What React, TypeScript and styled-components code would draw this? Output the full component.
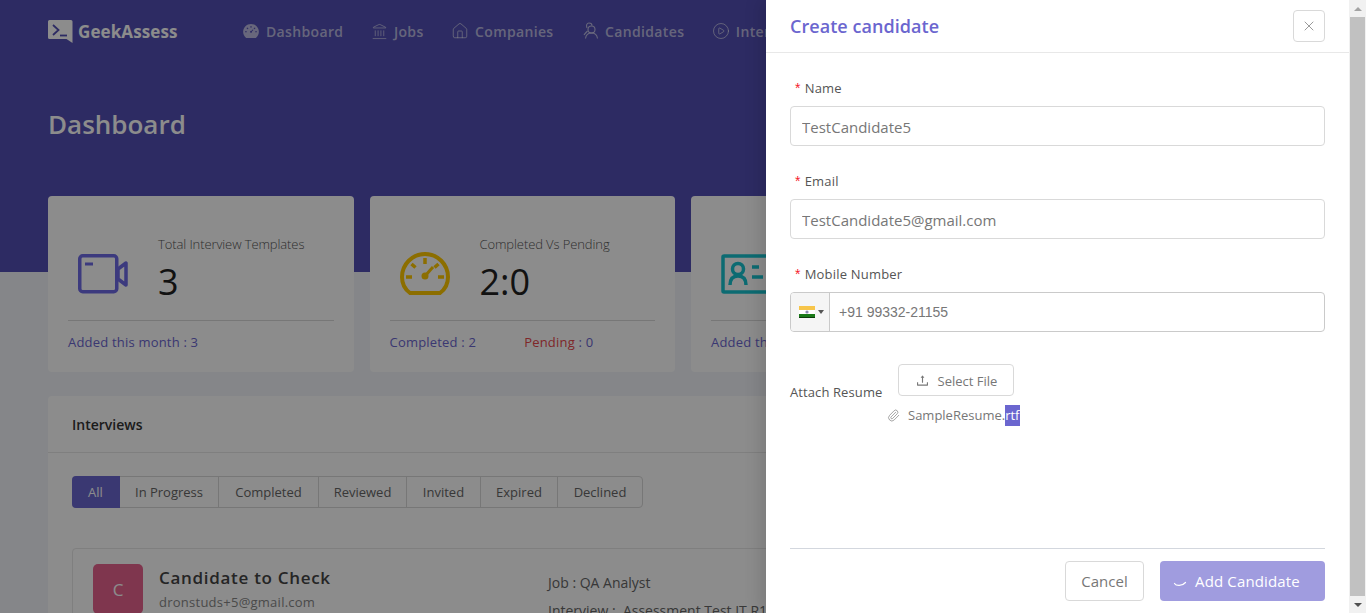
import React from 'react';
import styled, { createGlobalStyle } from 'styled-components';
import { AiFillDashboard, AiOutlineUpload } from 'react-icons/ai';
import { CirclePlay, House, Landmark, Paperclip, X } from 'lucide-react';

const primary = '#6b66cf';

const GlobalStyle = createGlobalStyle`
  html, body {
    margin: 0;
    height: 100%;
    overflow: hidden;
    background: #f2f4fa;
    font-family: "Open Sans", "Noto Sans", sans-serif;
  }
  * { box-sizing: border-box; }
`;

const Shell = styled.div`
  display: flex;
  width: 1366px;
  height: 613px;
  overflow: hidden;
`;

const Viewport = styled.div`
  position: relative;
  flex: 1;
  overflow: hidden;
`;

const Hero = styled.div`
  height: 272px;
  padding: 0 48px;
  background: #524fb4;
  color: #fff;
`;

const TopBar = styled.div`
  display: flex;
  align-items: center;
  height: 62px;
`;

const Logo = styled.div`
  display: flex;
  align-items: center;
  gap: 5px;
  width: 194px;
  font-size: 17px;
  font-weight: 700;
  letter-spacing: 0.1px;
`;

const NavItem = styled.div`
  display: flex;
  align-items: center;
  gap: 6px;
  margin-right: 27.5px;
  color: rgba(255, 255, 255, 0.62);
  font-size: 14px;
  font-weight: 600;
  letter-spacing: 0.35px;
  white-space: nowrap;
`;

const PageTitle = styled.h1`
  margin: 43px 0 0;
  font-size: 26px;
  line-height: 38px;
  font-weight: 600;
`;

const Content = styled.div`
  margin-top: -76px;
  padding: 0 48px;
`;

const Stats = styled.div`
  display: grid;
  grid-template-columns: repeat(4, 305.5px);
  gap: 16px;
`;

const StatCard = styled.div`
  height: 176px;
  padding: 0 20px;
  background: #fff;
  border-radius: 4px;
`;

const StatTop = styled.div`
  display: flex;
  align-items: center;
  height: 125px;
  padding: 32px 0 0 10px;
  border-bottom: 1px solid #d9d9d9;
`;

const StatIcon = styled.div`
  width: 80px;
  display: flex;
`;

const StatText = styled.div`
  padding-bottom: 6px;
`;

const StatLabel = styled.div`
  font-size: 13px;
  font-weight: 300;
  letter-spacing: -0.1px;
  color: #555;
  line-height: 18px;
  margin-bottom: 4px;
  white-space: nowrap;
`;

const StatValue = styled.div`
  font-size: 36px;
  line-height: 50px;
  color: #222;
`;

const StatFoot = styled.div`
  display: flex;
  gap: 48px;
  padding-top: 11px;
  font-size: 13px;
  letter-spacing: 0.2px;
  line-height: 20px;
  color: ${primary};
`;

const Danger = styled.span`
  color: #e8474c;
`;

const Panel = styled.div`
  margin-top: 24px;
  width: 1272px;
  background: #fff;
  border-radius: 4px;
`;

const PanelHead = styled.div`
  height: 57px;
  padding: 18px 24px 0;
  border-bottom: 1px solid #e8e8e8;
  font-size: 14px;
  line-height: 22px;
  font-weight: 600;
  color: #333;
`;

const PanelBody = styled.div`
  padding: 23px 24px;
`;

const Tabs = styled.div`
  display: flex;
  width: max-content;
  height: 32px;
  border: 1px solid #d9d9d9;
  border-radius: 4px;
`;

const Tab = styled.div<{ $active?: boolean; $width: number }>`
  width: ${p => p.$width}px;
  text-align: center;
  font-size: 13px;
  color: ${p => (p.$active ? '#fff' : '#666')};
  background: ${p => (p.$active ? primary : 'transparent')};
  border-right: 1px solid ${p => (p.$active ? primary : '#d9d9d9')};
  border-radius: ${p => (p.$active ? '4px 0 0 4px' : '0')};
  margin: ${p => (p.$active ? '-1px 0 -1px -1px' : '0')};
  line-height: ${p => (p.$active ? '32px' : '30px')};
  &:last-child { border-right: 0; }
`;

const InterviewCard = styled.div`
  display: flex;
  margin-top: 40px;
  padding: 15px 20px;
  height: 120px;
  border: 1px solid #e8e8e8;
  border-radius: 4px;
`;

const Avatar = styled.div`
  flex: none;
  display: flex;
  align-items: center;
  justify-content: center;
  width: 50px;
  height: 50px;
  border-radius: 5px;
  background: #e8638f;
  color: #fff;
  font-size: 17px;
`;

const Person = styled.div`
  width: 405px;
  padding-left: 16px;
`;

const PersonName = styled.div`
  font-size: 17px;
  line-height: 28px;
  font-weight: 600;
  color: #444;
  letter-spacing: 0.7px;
`;

const PersonMail = styled.div`
  font-size: 13px;
  line-height: 21px;
  color: #888;
  letter-spacing: 0.25px;
`;

const JobInfo = styled.div`
  padding-top: 5px;
  font-size: 14px;
  line-height: 28px;
  color: #666;
  white-space: pre;
`;

const Overlay = styled.div`
  position: absolute;
  inset: 0;
  background: rgba(0, 0, 0, 0.45);
`;

const Drawer = styled.div`
  position: absolute;
  top: 0;
  right: 0;
  bottom: 0;
  width: 583px;
  display: flex;
  flex-direction: column;
  background: #fff;
  box-shadow: -6px 0 16px rgba(0, 0, 0, 0.12);
`;

const DrawerHead = styled.div`
  display: flex;
  align-items: center;
  justify-content: space-between;
  height: 53px;
  padding: 0 24px 1px;
  border-bottom: 1px solid #e8e8e8;
`;

const DrawerTitle = styled.div`
  font-size: 18px;
  font-weight: 600;
  color: ${primary};
  letter-spacing: 0.05px;
`;

const CloseButton = styled.button`
  display: flex;
  align-items: center;
  justify-content: center;
  width: 32px;
  height: 32px;
  padding: 0;
  background: #fff;
  border: 1px solid #d9d9d9;
  border-radius: 4px;
  color: #666;
`;

const DrawerBody = styled.div`
  flex: 1;
  padding: 24px 24px 0;
`;

const Field = styled.div`
  margin-bottom: 24px;
`;

const FieldLabel = styled.div`
  height: 22px;
  margin-bottom: 7px;
  padding-left: 5px;
  font-size: 13px;
  letter-spacing: 0.2px;
  line-height: 22px;
  color: #555;
`;

const Star = styled.span`
  margin-right: 4px;
  color: #f5222d;
  font-family: "Liberation Sans", sans-serif;
  font-size: 14px;
`;

const TextInput = styled.input`
  display: block;
  width: 100%;
  height: 40px;
  padding: 1px 11px 0;
  border: 1px solid #d9d9d9;
  border-radius: 4px;
  outline: 0;
  font-family: inherit;
  font-size: 15px;
  color: #777;
`;

const PhoneBox = styled.div`
  display: flex;
  height: 40px;
  border: 1px solid #cacaca;
  border-radius: 4px;
`;

const FlagButton = styled.div`
  display: flex;
  align-items: center;
  gap: 3px;
  width: 39px;
  padding-left: 8px;
  background: #f5f5f5;
  border-right: 1px solid #cacaca;
  border-radius: 3px 0 0 3px;
`;

const Caret = styled.span`
  width: 0;
  height: 0;
  border-left: 3px solid transparent;
  border-right: 3px solid transparent;
  border-top: 4px solid #555;
`;

const PhoneInput = styled.input`
  flex: 1;
  min-width: 0;
  padding: 0 9px;
  border: 0;
  outline: 0;
  background: transparent;
  font-family: "Liberation Sans", sans-serif;
  font-size: 14px;
  color: #777;
`;

const AttachRow = styled.div`
  display: flex;
  align-items: flex-end;
  margin-top: 32px;
`;

const AttachLabel = styled.div`
  width: 108px;
  font-size: 13px;
  letter-spacing: 0.1px;
  line-height: 18px;
  color: #555;
  margin-bottom: -5px;
`;

const SelectButton = styled.button`
  display: flex;
  align-items: center;
  justify-content: center;
  gap: 8px;
  width: 116px;
  height: 32px;
  padding: 1px 0 0;
  background: #fff;
  border: 1px solid #d9d9d9;
  border-radius: 4px;
  font-family: inherit;
  font-size: 13px;
  color: #777;
`;

const FileRow = styled.div`
  display: flex;
  align-items: center;
  gap: 8px;
  margin-top: 8px;
  padding-left: 97px;
  font-size: 13px;
  line-height: 22px;
  color: #777;
`;

const Selected = styled.span`
  display: inline-block;
  line-height: 21px;
  background: ${primary};
  color: #fff;
`;

const ClipIcon = styled(Paperclip)`
  color: #888;
`;

const DrawerFoot = styled.div`
  display: flex;
  justify-content: flex-end;
  gap: 16px;
  margin: 0 24px;
  padding: 12px 0;
  border-top: 1px solid #d3d7de;
`;

const CancelButton = styled.button`
  width: 79px;
  height: 40px;
  padding: 0;
  background: #fff;
  border: 1px solid #d9d9d9;
  border-radius: 4px;
  font-family: inherit;
  font-size: 15px;
  color: #777;
`;

const SubmitButton = styled.button`
  display: flex;
  align-items: center;
  gap: 8px;
  width: 165px;
  height: 40px;
  padding: 0 0 0 13px;
  background: #a09cdf;
  border: 0;
  border-radius: 4px;
  font-family: inherit;
  font-size: 15px;
  font-weight: 500;
  letter-spacing: 0.15px;
  color: #fff;
`;

const Scrollbar = styled.div`
  flex: none;
  display: flex;
  flex-direction: column;
  align-items: center;
  width: 17px;
  background: #f1f1f1;
`;

const ScrollArrow = styled.div<{ $down?: boolean }>`
  flex: none;
  height: 17px;
  display: flex;
  align-items: center;
  justify-content: center;
  &::after {
    content: '';
    border-left: 4px solid transparent;
    border-right: 4px solid transparent;
    border-${p => (p.$down ? 'top' : 'bottom')}: 4px solid ${p => (p.$down ? '#505050' : '#a3a3a3')};
  }
`;

const ScrollThumb = styled.div`
  flex: 1;
  width: 15px;
`;

const ScrollFill = styled.div`
  height: 579px;
  width: 15px;
  background: #c1c1c1;
`;

const LogoMark = () => (
  <svg width="25" height="23" viewBox="0 0 25 23">
    <path d="M1.500 0H23a1.500 1.500 0 0 1 1.500 1.500V23l-6-4H1.500A1.500 1.500 0 0 1 0 17.500V1.500A1.500 1.500 0 0 1 1.500 0z" fill="#fff" />
    <path d="M5 5l5.500 5L5 15" fill="none" stroke="#524fb4" strokeWidth="1.800" />
    <path d="M12 15.500h7" stroke="#524fb4" strokeWidth="1.800" />
  </svg>
);

const PeopleIcon = () => (
  <svg width="18" height="18" viewBox="0 0 18 18" fill="none" stroke="currentColor" strokeWidth="1.100">
    <circle cx="10.500" cy="7.500" r="3.500" />
    <path d="M4.500 16.500c.5-3.500 3-5.500 6-5.500s5.500 2 6 5.500" />
    <path d="M6 6C4.800 3 6 1 8 1s3 1 3 2.500" />
    <path d="M6.500 9c-1 1-2.500 2.500-3.500 4" />
  </svg>
);

const VideoIcon = () => (
  <svg width="50" height="42" viewBox="0 0 50 42" fill="none" stroke="#6e6ae6" strokeWidth="3.500" strokeLinejoin="round">
    <rect x="1.750" y="2.750" width="37" height="36" rx="3" />
    <path d="M40 16l8-6v22l-8-6z" />
    <path d="M7 11h8" strokeWidth="3" />
  </svg>
);

const GaugeIcon = () => (
  <svg width="50" height="46" viewBox="0 0 50 46" fill="none" stroke="#ffc800" strokeWidth="4">
    <path d="M10 42C4.500 38 2 32 2 26a23 23 0 0 1 46 0c0 6-2.500 12-8 16z" />
    <path d="M25 7v6M11.500 13l4 3.500M38.500 13l-4 3.500M6 26h6M38 26h6" strokeWidth="3.500" />
    <path d="M25 25l8-9" strokeWidth="3" />
    <circle cx="25" cy="25" r="3.500" fill="#ffc800" stroke="none" />
  </svg>
);

const CardIcon = () => (
  <svg width="58" height="42" viewBox="0 0 58 42" fill="none" stroke="#17c3d0" strokeWidth="3.500">
    <rect x="2" y="3" width="54" height="36" rx="1" />
    <circle cx="17" cy="16" r="5.500" />
    <path d="M9 32c0-6 3-9 8-9s8 3 8 9" />
    <path d="M31 14h7M31 24h11" />
  </svg>
);

const IndiaFlag = () => (
  <svg width="16" height="12" viewBox="0 0 16 12">
    <rect width="16" height="12" fill="#fff" />
    <rect width="16" height="4" fill="#f7c54a" />
    <rect y="8" width="16" height="4" fill="#1a7a18" />
    <rect y="11" width="16" height="1" fill="#0d3d0c" />
    <circle cx="8" cy="6" r="1.600" fill="#8a8ab0" />
  </svg>
);

const Spinner = () => (
  <svg width="14" height="14" viewBox="0 0 14 14" fill="none" stroke="#fff" strokeWidth="1.200">
    <path d="M1.500 9.500C3 12 9 12.500 12.500 8.500" strokeLinecap="round" />
  </svg>
);

const navItems = [
  { label: 'Dashboard', icon: <AiFillDashboard size={18} /> },
  { label: 'Jobs', icon: <Landmark size={17} strokeWidth={1.200} /> },
  { label: 'Companies', icon: <House size={18} strokeWidth={1.200} /> },
  { label: 'Candidates', icon: <PeopleIcon /> },
  { label: 'Interviews', icon: <CirclePlay size={18} strokeWidth={1.200} /> },
];

const tabs = [
  { label: 'All', width: 48 },
  { label: 'In Progress', width: 99 },
  { label: 'Completed', width: 100 },
  { label: 'Reviewed', width: 88 },
  { label: 'Invited', width: 74 },
  { label: 'Expired', width: 77 },
  { label: 'Declined', width: 84 },
];

const App: React.FC = () => {
  return (
    <Shell>
      <GlobalStyle />
      <Viewport>
        <Hero>
          <TopBar>
            <Logo>
              <LogoMark />
              GeekAssess
            </Logo>
            {navItems.map(item => (
              <NavItem key={item.label}>
                {item.icon}
                {item.label}
              </NavItem>
            ))}
          </TopBar>
          <PageTitle>Dashboard</PageTitle>
        </Hero>
        <Content>
          <Stats>
            <StatCard>
              <StatTop>
                <StatIcon><VideoIcon /></StatIcon>
                <StatText>
                  <StatLabel>Total Interview Templates</StatLabel>
                  <StatValue>3</StatValue>
                </StatText>
              </StatTop>
              <StatFoot>Added this month : 3</StatFoot>
            </StatCard>
            <StatCard>
              <StatTop>
                <StatIcon><GaugeIcon /></StatIcon>
                <StatText>
                  <StatLabel>Completed Vs Pending</StatLabel>
                  <StatValue>2:0</StatValue>
                </StatText>
              </StatTop>
              <StatFoot>
                <span>Completed : 2</span>
                <span><Danger>Pending</Danger> : 0</span>
              </StatFoot>
            </StatCard>
            <StatCard>
              <StatTop>
                <StatIcon><CardIcon /></StatIcon>
                <StatText>
                  <StatLabel>Candidates</StatLabel>
                  <StatValue>5</StatValue>
                </StatText>
              </StatTop>
              <StatFoot>Added this month : 5</StatFoot>
            </StatCard>
          </Stats>
          <Panel>
            <PanelHead>Interviews</PanelHead>
            <PanelBody>
              <Tabs>
                {tabs.map((tab, i) => (
                  <Tab key={tab.label} $active={i === 0} $width={tab.width}>{tab.label}</Tab>
                ))}
              </Tabs>
              <InterviewCard>
                <Avatar>C</Avatar>
                <Person>
                  <PersonName>Candidate to Check</PersonName>
                  <PersonMail>dronstuds+5@gmail.com</PersonMail>
                </Person>
                <JobInfo>
                  {'Job : QA Analyst\nInterview :  Assessment Test IT R1'}
                </JobInfo>
              </InterviewCard>
            </PanelBody>
          </Panel>
        </Content>
        <Overlay />
        <Drawer>
          <DrawerHead>
            <DrawerTitle>Create candidate</DrawerTitle>
            <CloseButton><X size={16} strokeWidth={1} /></CloseButton>
          </DrawerHead>
          <DrawerBody>
            <Field>
              <FieldLabel><Star>*</Star>Name</FieldLabel>
              <TextInput readOnly value="TestCandidate5" />
            </Field>
            <Field>
              <FieldLabel><Star>*</Star>Email</FieldLabel>
              <TextInput readOnly value="TestCandidate5@gmail.com" />
            </Field>
            <Field>
              <FieldLabel><Star>*</Star>Mobile Number</FieldLabel>
              <PhoneBox>
                <FlagButton><IndiaFlag /><Caret /></FlagButton>
                <PhoneInput readOnly value="+91 99332-21155" />
              </PhoneBox>
            </Field>
            <AttachRow>
              <AttachLabel>Attach Resume</AttachLabel>
              <SelectButton><AiOutlineUpload size={15} />Select File</SelectButton>
            </AttachRow>
            <FileRow>
              <ClipIcon size={13} strokeWidth={1.400} />
              <span>SampleResume.<Selected>rtf</Selected></span>
            </FileRow>
          </DrawerBody>
          <DrawerFoot>
            <CancelButton>Cancel</CancelButton>
            <SubmitButton><Spinner />Add Candidate</SubmitButton>
          </DrawerFoot>
        </Drawer>
      </Viewport>
      <Scrollbar>
        <ScrollArrow />
        <ScrollThumb><ScrollFill /></ScrollThumb>
        <ScrollArrow $down />
      </Scrollbar>
    </Shell>
  );
};

export default App;
